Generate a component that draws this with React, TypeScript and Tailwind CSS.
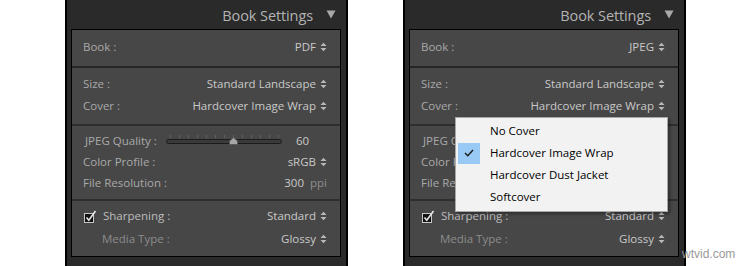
import React from 'react'

const Arrows = () => (
  <svg width="7" height="10" viewBox="0 0 7 10" className="ml-[4px] shrink-0">
    <path d="M0.5 4 L3.5 0.8 L6.5 4 Z" fill="#b9b9b9" />
    <path d="M0.5 6 L3.5 9.2 L6.5 6 Z" fill="#b9b9b9" />
  </svg>
)

const Row = ({ label, value, arrows = true, dim = false }: { label: string; value: React.ReactNode; arrows?: boolean; dim?: boolean }) => (
  <div className="flex h-[22px] items-center pl-[11px] pr-[13px]">
    <span className={dim ? 'text-[#8c8c8c]' : 'text-[#a9a9a9]'}>{label}</span>
    <span className="ml-auto flex items-center text-[#c9c9c9]">
      {value}
      {arrows ? <Arrows /> : <span className="w-[11px]" />}
    </span>
  </div>
)

const Slider = () => {
  const ticks = Array.from({ length: 13 }, (_, i) => i)
  return (
    <div className="relative h-[14px] w-[116px]">
      {ticks.map((t) => (
        <div key={t} className="absolute top-[1px] h-[3px] w-px bg-[#616161]" style={{ left: 4 + t * 9 }} />
      ))}
      <div className="absolute left-0 right-0 top-[5px] h-[5px] rounded-full border border-[#1c1c1c] bg-[#3a3a3a]" />
      <svg width="9" height="8" viewBox="0 0 9 8" className="absolute left-[63px] top-[3px]">
        <path d="M0.5 7.5 L0.5 4 L4.5 0.5 L8.5 4 L8.5 7.5 Z" fill="#a6a6a6" stroke="#5a5a5a" />
      </svg>
    </div>
  )
}

const Check = () => (
  <svg width="13" height="13" viewBox="0 0 13 13" className="shrink-0">
    <rect x="0.5" y="3.5" width="9" height="9" fill="#121212" stroke="#c8c8c8" />
    <path d="M2.5 7.5 L4.8 10.2 L11.5 1" fill="none" stroke="#e6e6e6" strokeWidth="1.6" />
  </svg>
)

const Panel = ({ book, menu = false }: { book: string; menu?: boolean }) => (
  <div className="relative flex h-[266px] w-[283px] shrink-0 flex-col border-x-2 border-black bg-[#2a2a2a] pl-[4px]">
    <div className="flex h-[29px] items-center justify-end pr-[10px] text-[14.5px] tracking-[-0.1px] text-[#b3b3b3]">
      <span className="mr-[13px] mt-[2px]">Book Settings</span>
      <svg width="10" height="9" viewBox="0 0 10 9">
        <path d="M0.5 0.5 L9.5 0.5 L5 8.5 Z" fill="#a8a8a8" />
      </svg>
    </div>
    <div className="w-[270px] border border-black bg-[#474747] text-[11.5px] leading-none">
      <div className="pb-[8px] pt-[6px]">
        <Row label="Book :" value={book} />
      </div>
      <div className="border-t-2 border-[#262626] pb-[7px] pt-[5px]">
        <Row label="Size :" value="Standard Landscape" />
        <Row label="Cover :" value="Hardcover Image Wrap" />
      </div>
      <div className="border-t-2 border-[#2e2e2e] pb-[6px] pt-[4px]">
        <div className="flex h-[21px] items-center pl-[13px]">
          <span className="w-[81px] text-[#a9a9a9]">JPEG Quality :</span>
          <Slider />
          <span className="ml-[14px] text-[#c9c9c9]">60</span>
        </div>
        <div className="flex h-[21px] items-center pl-[11px] pr-[13px]">
          <span className="text-[#a9a9a9]">Color Profile :</span>
          <span className="ml-auto flex items-center text-[#c9c9c9]">
            sRGB
            <Arrows />
          </span>
        </div>
        <div className="flex h-[21px] items-center pl-[11px] pr-[13px]">
          <span className="text-[#a9a9a9]">File Resolution :</span>
          <span className="ml-auto flex items-center text-[#c9c9c9]">
            300
            <span className="ml-[6px] text-[#8e8e8e]">ppi</span>
          </span>
        </div>
      </div>
      <div className="flex flex-col gap-px border-t-2 border-[#2e2e2e] pb-[6px] pt-[4px]">
        <div className="flex h-[22px] items-center pl-[12px] pr-[13px]">
          <Check />
          <span className="ml-[6px] text-[#bdbdbd]">Sharpening :</span>
          <span className="ml-auto flex items-center text-[#c9c9c9]">
            Standard
            <Arrows />
          </span>
        </div>
        <div className="flex h-[22px] items-center pl-[30px] pr-[13px]">
          <span className="text-[#8c8c8c]">Media Type :</span>
          <span className="ml-auto flex items-center text-[#c9c9c9]">
            Glossy
            <Arrows />
          </span>
        </div>
      </div>
    </div>
    {menu && (
      <div className="absolute left-[50px] top-[117px] w-[213px] border border-[#a8a8a8] bg-[#f2f2f2] pb-[3px] pt-[2px] text-[11.5px] text-black shadow-[2px_2px_3px_rgba(0,0,0,0.35)]">
        {['No Cover', 'Hardcover Image Wrap', 'Hardcover Dust Jacket', 'Softcover'].map((item, i) => (
          <div key={item} className="flex h-[22px] items-center">
            <div className={`ml-[2px] flex h-[21px] w-[22px] items-center justify-center ${i === 1 ? 'bg-[#99c9f5]' : ''}`}>
              {i === 1 && (
                <svg width="10" height="8" viewBox="0 0 10 8">
                  <path d="M1 4 L3.8 6.8 L9 1" fill="none" stroke="#1a1a1a" strokeWidth="1.4" />
                </svg>
              )}
            </div>
            <span className="ml-[10px]">{item}</span>
          </div>
        ))}
      </div>
    )}
  </div>
)

export default function App() {
  return (
    <div className="flex h-[266px] w-[750px] overflow-hidden bg-white" style={{ fontFamily: '"Open Sans", "Noto Sans", sans-serif' }}>
      <div className="ml-[65px]">
        <Panel book="PDF" />
      </div>
      <div className="ml-[55px]">
        <Panel book="JPEG" menu />
      </div>
      <div className="relative flex-1">
        <span className="absolute bottom-[3px] left-[-4px] text-[12px] text-[#9a9a9a]" style={{ fontFamily: '"Liberation Sans", sans-serif' }}>wtvid.com</span>
      </div>
    </div>
  )
}
